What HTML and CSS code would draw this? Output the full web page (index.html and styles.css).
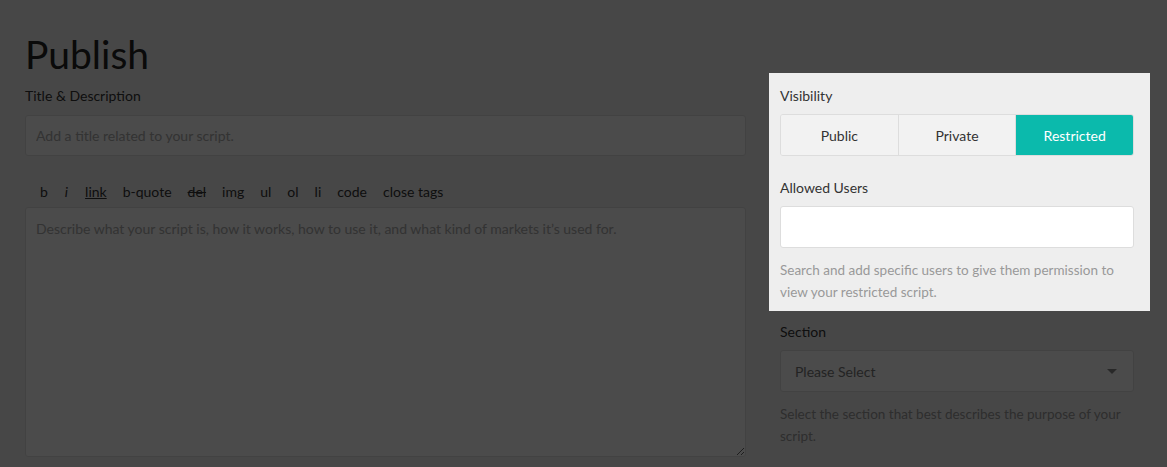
FILE: index.html
```html
<!DOCTYPE html>
<html lang="en">
<head>
    <meta charset="UTF-8">
    <title>Publish</title>
    <link rel="stylesheet" href="styles.css">
</head>
<body>
    <div class="overlay"></div>
    <div class="page">
        <h1 class="page-title">Publish</h1>
        <div class="columns">
            <div class="main-col">
                <label class="field-label">Title &amp; Description</label>
                <input class="text-input" type="text" placeholder="Add a title related to your script.">
                <div class="toolbar">
                    <span>b</span>
                    <span class="tb-italic">i</span>
                    <span class="tb-link">link</span>
                    <span>b-quote</span>
                    <span class="tb-del">del</span>
                    <span>img</span>
                    <span>ul</span>
                    <span>ol</span>
                    <span>li</span>
                    <span>code</span>
                    <span>close tags</span>
                </div>
                <textarea class="description" placeholder="Describe what your script is, how it works, how to use it, and what kind of markets it’s used for."></textarea>
            </div>
            <div class="side-col">
                <div class="spotlight">
                    <label class="field-label">Visibility</label>
                    <div class="segmented">
                        <button class="seg-btn">Public</button>
                        <button class="seg-btn">Private</button>
                        <button class="seg-btn selected">Restricted</button>
                    </div>
                    <label class="field-label spaced">Allowed Users</label>
                    <input class="text-input white" type="text">
                    <p class="help">Search and add specific users to give them permission to view your restricted script.</p>
                </div>
                <label class="field-label spaced-sm">Section</label>
                <div class="select-wrap">
                    <select class="select">
                        <option>Please Select</option>
                    </select>
                </div>
                <p class="help">Select the section that best describes the purpose of your script.</p>
            </div>
        </div>
    </div>
</body>
</html>
```

FILE: styles.css
```css
/* Page */
body {
    margin: 0;
    background-color: #eee;
    color: #333;
    font-family: Lato, "Liberation Sans", sans-serif;
    font-size: 14px;
}

.overlay {
    position: fixed;
    top: 0;
    left: 0;
    right: 0;
    bottom: 0;
    background-color: rgba(0, 0, 0, 0.7);
    z-index: 1;
}

.page {
    padding: 0 25px;
}

.page-title {
    margin: 0;
    padding-top: 31px;
    font-size: 39px;
    line-height: 46px;
    font-weight: 400;
    color: #222;
    height: 55px;
}

.columns {
    display: flex;
    gap: 34px;
}

.main-col {
    width: 721px;
    display: flex;
    flex-direction: column;
}

.side-col {
    width: 354px;
    display: flex;
    flex-direction: column;
}

.field-label {
    display: block;
    line-height: 20px;
    margin-bottom: 8px;
}

.main-col .field-label {
    margin-bottom: 9px;
}

.field-label.spaced {
    margin-top: 22px;
}

.field-label.spaced-sm {
    margin-top: 11px;
}

.text-input {
    box-sizing: border-box;
    height: 42px;
    width: 100%;
    margin: 0;
    padding: 0 10px;
    font: inherit;
    color: #333;
    background-color: #fafafa;
    border: 1px solid #ddd;
    border-radius: 3px;
    outline: none;
}

.main-col .text-input {
    height: 41px;
}

.text-input::placeholder,
.description::placeholder {
    color: #aaa;
}

.text-input.white {
    background-color: #fff;
}

.toolbar {
    display: flex;
    gap: 16px;
    padding-left: 15px;
    margin-top: 26px;
    margin-bottom: 5px;
    line-height: 20px;
    color: #333;
}

.tb-italic {
    font-style: italic;
    padding: 0 1px;
}

.tb-link {
    text-decoration: underline;
}

.tb-del {
    text-decoration: line-through;
}

.description {
    box-sizing: border-box;
    height: 250px;
    width: 100%;
    margin: 0;
    padding: 11px 10px;
    font: inherit;
    line-height: 20px;
    background-color: #fafafa;
    border: 1px solid #ddd;
    border-radius: 3px;
    outline: none;
}

/* Highlighted block */
.spotlight {
    position: relative;
    z-index: 2;
    background-color: #eee;
    margin: -13px -16px 0 -11px;
    padding: 13px 16px 8px 11px;
}

.segmented {
    display: flex;
    height: 42px;
    border: 1px solid #ddd;
    border-radius: 3px;
    box-sizing: border-box;
    overflow: hidden;
}

.seg-btn {
    flex: 1;
    margin: 0;
    font: inherit;
    color: #333;
    background-color: #f2f2f2;
    border: none;
    border-right: 1px solid #ddd;
}

.seg-btn:last-child {
    border-right: none;
}

.seg-btn.selected {
    background-color: #0bbaac;
    color: #fff;
}

.help {
    margin: 11px 0 0;
    font-size: 13.5px;
    line-height: 22px;
    color: #999;
}

.select-wrap {
    position: relative;
}

.select-wrap:after {
    content: '';
    position: absolute;
    right: 17px;
    top: 19px;
    border-left: 5px solid transparent;
    border-right: 5px solid transparent;
    border-top: 5px solid #888;
}

.select {
    appearance: none;
    box-sizing: border-box;
    width: 100%;
    height: 42px;
    margin: 0;
    padding: 0 14px;
    font: inherit;
    color: #777;
    background-color: #fafafa;
    border: 1px solid #ddd;
    border-radius: 3px;
}
```
